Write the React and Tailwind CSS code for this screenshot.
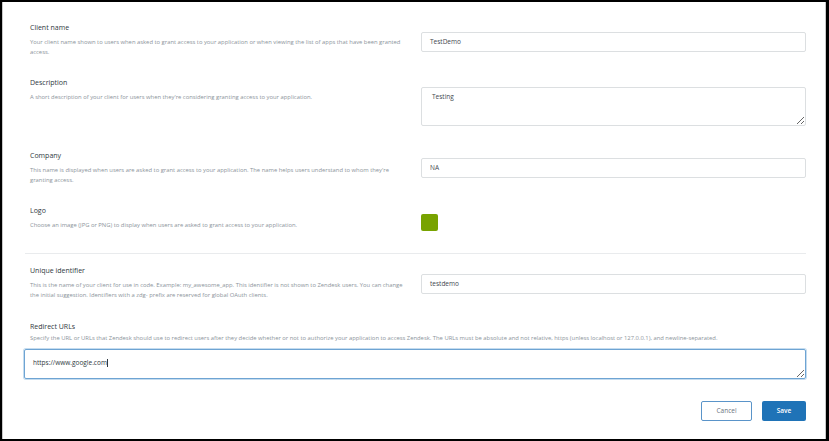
function Row({ label, desc, className, children }) {
  return (
    <div className={`flex ${className}`}>
      <div className="w-[386px] shrink-0 pl-[6px]">
        <div className="text-[7px] leading-[10px] text-[#2f3941]">{label}</div>
        <div className="mt-[4px] text-[5.85px] leading-[10px] text-[#8c949b]">{desc}</div>
      </div>
      <div className="ml-[11px] flex-1">{children}</div>
    </div>
  );
}

function TextInput({ value }) {
  return (
    <div className="h-[20px] rounded-[2px] border border-[#dcdfe1] pl-[8px] flex items-center text-[6.5px] text-[#3f474f]">
      {value}
    </div>
  );
}

export default function App() {
  return (
    <div
      className="w-[829px] h-[441px] bg-white border-black border-t-2 border-b-2 border-l-2 border-r-[3px]"
      style={{ fontFamily: "'Open Sans', 'Noto Sans', sans-serif" }}
    >
      <div className="h-full border-l border-r border-[#c9c9c9] pl-[21px] pr-[19px] pt-[21px]">
        <Row
          label="Client name"
          desc="Your client name shown to users when asked to grant access to your application or when viewing the list of apps that have been granted access."
        >
          <div className="pt-[9px]">
            <TextInput value="TestDemo" />
          </div>
        </Row>

        <Row
          className="mt-[21px]"
          label="Description"
          desc="A short description of your client for users when they're considering granting access to your application."
        >
          <div className="pt-[9px]">
            <textarea
              defaultValue="Testing"
              className="block w-full h-[39px] rounded-[2px] border border-[#dcdfe1] pl-[10px] pt-[5px] text-[6.5px] leading-[8px] text-[#3f474f] outline-none"
            />
          </div>
        </Row>

        <Row
          className="mt-[25px]"
          label="Company"
          desc="This name is displayed when users are asked to grant access to your application. The name helps users understand to whom they're granting access."
        >
          <div className="pt-[7px]">
            <TextInput value="NA" />
          </div>
        </Row>

        <Row
          className="mt-[21px]"
          label="Logo"
          desc="Choose an image (JPG or PNG) to display when users are asked to grant access to your application."
        >
          <div className="pt-[8px]">
            <div className="w-[17px] h-[17px] rounded-[2px] bg-[#78a300]" />
          </div>
        </Row>

        <div className="mt-[22px] h-px bg-[#e9ebed] ml-[1px]" />

        <Row
          className="mt-[12px]"
          label="Unique identifier"
          desc="This is the name of your client for use in code. Example: my_awesome_app. This identifier is not shown to Zendesk users. You can change the initial suggestion. Identifiers with a zdg- prefix are reserved for global OAuth clients."
        >
          <div className="pt-[8px]">
            <TextInput value="testdemo" />
          </div>
        </Row>

        <div className="mt-[22px] pl-[6px]">
          <div className="text-[7px] leading-[10px] text-[#2f3941]">Redirect URLs</div>
          <div className="mt-[1px] text-[5.85px] leading-[10px] text-[#8c949b] whitespace-nowrap">
            Specify the URL or URLs that Zendesk should use to redirect users after they decide whether or not to authorize your application to access Zendesk. The URLs must be absolute and not relative, https (unless localhost or 127.0.0.1), and newline-separated.
          </div>
        </div>
        <div className="relative mt-[6px]">
          <textarea
            defaultValue="https://www.google.com"
            className="block w-full h-[30px] rounded-[2px] border border-[#6ea4d3] shadow-[0_0_0_1px_#c5dcef] pl-[8px] pt-[9px] text-[6.5px] leading-[8px] text-[#2f3941] outline-none"
          />
          <div className="pointer-events-none absolute left-[9px] top-[10px] flex items-center text-[6.5px] leading-[8px]">
            <span className="invisible">https://www.google.com</span>
            <span className="w-px h-[8px] bg-[#2f3941]" />
          </div>
        </div>

        <div className="mt-[22px] flex justify-end gap-[10px]">
          <button className="w-[51px] h-[20px] rounded-[2px] border border-[#5a94c9] text-[6.5px] text-[#6b747c] bg-white">
            Cancel
          </button>
          <button className="w-[44px] h-[20px] rounded-[2px] bg-[#1f73b7] text-[6.5px] font-semibold text-white">
            Save
          </button>
        </div>
      </div>
    </div>
  );
}
